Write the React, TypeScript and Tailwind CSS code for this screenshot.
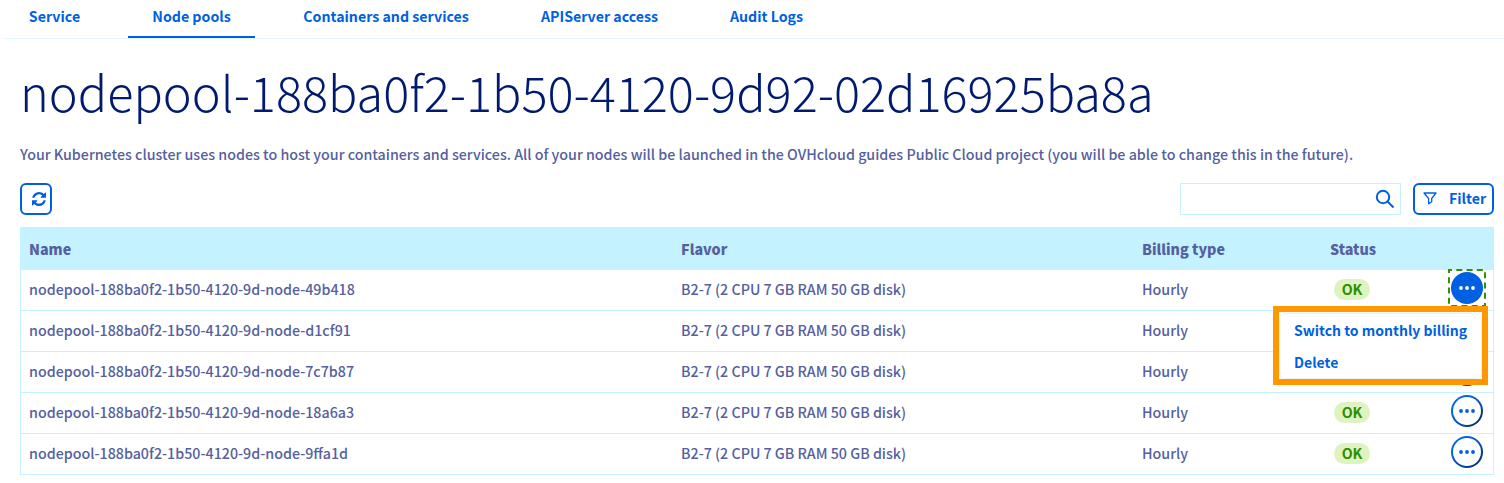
const tabs = [
  { label: "Service", cls: "w-[99px]" },
  { label: "Node pools", cls: "w-[127px] border-b-2 border-[#005fe2]" },
  { label: "Containers and services", cls: "w-[214px]" },
  { label: "APIServer access", cls: "w-[165px]" },
  { label: "Audit Logs", cls: "w-[121px]" },
];

const nodes = [
  { id: "49b418", status: "OK" },
  { id: "d1cf91", status: "" },
  { id: "7c7b87", status: "" },
  { id: "18a6a3", status: "OK" },
  { id: "9ffa1d", status: "OK" },
];

function Dots() {
  return (
    <svg width="16" height="4" viewBox="0 0 16 4" fill="currentColor">
      <circle cx="2" cy="2" r="1.900" />
      <circle cx="8" cy="2" r="1.900" />
      <circle cx="14" cy="2" r="1.900" />
    </svg>
  );
}

function ActionButton({ active }: { active: boolean }) {
  return (
    <button
      className={
        active
          ? "relative flex size-8 items-center justify-center rounded-full bg-linear-to-br from-[#005fe2] from-80% to-[#003a90] text-white"
          : "relative flex size-8 items-center justify-center rounded-full bg-linear-to-br from-[#0064ec] from-30% to-[#003580] to-85% text-[#005fe2]"
      }
    >
      {active ? (
        <Dots />
      ) : (
        <span className="flex size-7 items-center justify-center rounded-full bg-white">
          <Dots />
        </span>
      )}
      {active && (
        <svg className="absolute -top-[3px] -left-[3px]" width="38" height="38" viewBox="0 0 38 38">
          <rect x="1" y="1" width="36" height="36" fill="none" stroke="#2f9400" strokeWidth="2" strokeDasharray="6 4.285" strokeDashoffset="3" />
        </svg>
      )}
    </button>
  );
}

export default function App() {
  return (
    <div className="relative h-[483px] w-[1504px] overflow-hidden bg-white font-['Noto_Sans_CJK_SC',sans-serif] text-[14.26px] leading-5 font-medium text-[#5560a0]">
      <nav className="ml-[5px] flex h-[39px] gap-6 border-b border-[#e3f8fe] text-[14.2px] font-bold text-[#005fe2]">
        {tabs.map((t) => (
          <a key={t.label} className={`flex h-[38px] justify-center pt-[6px] whitespace-nowrap ${t.cls}`}>
            {t.label}
          </a>
        ))}
      </nav>
      <main className="pr-[10px] pl-5">
        <h1 className="mt-[16px] h-[72px] text-[48.7px] leading-[72px] font-light whitespace-nowrap text-[#001a70]">
          nodepool-188ba0f2-1b50-4120-9d92-02d16925ba8a
        </h1>
        <p className="mt-[17px] h-5 whitespace-nowrap">
          Your Kubernetes cluster uses nodes to host your containers and services. All of your nodes will be launched in the OVHcloud guides Public Cloud project (you will be able to change this in the future).
        </p>
        <div className="mt-[19px] flex h-8">
          <button className="flex size-8 items-center rounded-md border-2 border-[#005fe2] pb-px pl-[10px] text-[#005fe2]">
            <svg width="14" height="14" viewBox="0 0 1536 1536" fill="currentColor">
              <path d="M1511 928q0 5-1 7-64 268-268 434.500T764 1536q-146 0-282.500-55T238 1324l-129 129q-19 19-45 19t-45-19-19-45V960q0-26 19-45t45-19h448q26 0 45 19t19 45-19 45l-137 137q71 66 161 102t187 36q134 0 250-65t186-179q11-17 53-117 8-23 30-23h192q13 0 22.500 9.500t9.500 22.500zm25-800v448q0 26-19 45t-45 19h-448q-26 0-45-19t-19-45 19-45l138-138Q969 256 768 256q-134 0-250 65T332 500q-11 17-53 117-8 23-30 23H50q-13 0-22.500-9.500T18 608v-7q65-268 270-434.500T768 0q146 0 284 55.500T1297 212l130-129q19-19 45-19t45 19 19 45z" />
            </svg>
          </button>
          <div className="ml-auto flex h-8 w-[221px] items-center justify-end border border-[#c4f3ff] pr-[5px] text-[#005fe2]">
            <svg width="20" height="20" viewBox="0 0 20 20" fill="none" stroke="currentColor" strokeWidth="2">
              <circle cx="8" cy="8" r="6.2" />
              <path d="M12.400 12.400L18.500 18.500" />
            </svg>
          </div>
          <button className="ml-3 flex h-8 w-[81px] items-center rounded-md border-2 border-[#005fe2] pb-[2px] pl-2 text-[14.2px] font-bold text-[#005fe2]">
            <svg width="14" height="13" viewBox="0 0 14 13" fill="none" stroke="currentColor" strokeWidth="1.300" strokeLinejoin="round">
              <path d="M1 1H13L8.700 6.500V9.800L5.600 11.800V6.500Z" />
            </svg>
            <span className="ml-3">Filter</span>
          </button>
        </div>
        <div className="mt-3 w-[1474px] border border-[#c4f3ff]">
          <div className="flex h-[42px] items-center bg-[#c4f3ff] pl-2 pb-px text-[14.3px] font-extrabold">
            <span className="w-[652px]">Name</span>
            <span className="w-[461px]">Flavor</span>
            <span className="w-[188px]">Billing type</span>
            <span>Status</span>
          </div>
          {nodes.map((n, i) => (
            <div key={n.id} className="flex h-[41px] items-center border-b border-[#c4f3ff] pb-[2px] pl-2 last:h-10 last:border-b-0">
              <span className="w-[652px]">nodepool-188ba0f2-1b50-4120-9d-node-{n.id}</span>
              <span className="w-[461px]">B2-7 (2 CPU 7 GB RAM 50 GB disk)</span>
              <span className="w-[192px]">Hourly</span>
              <span className="mt-px flex h-[21px] w-9 items-center justify-center rounded-full bg-[#def3bf] pb-px font-bold text-[#2b8f00]">
                {n.status}
              </span>
              <span className="-mt-[3px] ml-[81px]">
                <ActionButton active={i === 0} />
              </span>
            </div>
          ))}
        </div>
      </main>
      <div className="absolute top-[306px] left-[1273px] h-[79px] w-[215px] border-6 border-[#ff9800] bg-white bg-clip-content pt-px">
        <div className="flex h-[66px] w-[203px] flex-col rounded-md border border-[#f1f1f8] pt-[6px] pl-[14px] text-[14px] font-bold text-[#005fe2]">
          <a className="h-8 whitespace-nowrap">Switch to monthly billing</a>
          <a>Delete</a>
        </div>
      </div>
    </div>
  );
}
